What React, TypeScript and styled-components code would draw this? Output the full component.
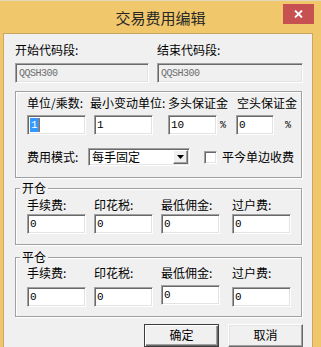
import React from "react";
import styled, { createGlobalStyle } from "styled-components";

const Global = createGlobalStyle`
  html, body { margin: 0; padding: 0; background: #f1c76c; }
  body {
    font-family: "Noto Sans CJK SC", "Liberation Sans", sans-serif;
    font-size: 12px;
    color: #000;
  }
  * { box-sizing: border-box; }
`;

const mono = `"Liberation Mono", "DejaVu Sans Mono", monospace`;

const Window = styled.div`
  width: 321px;
  height: 347px;
  overflow: hidden;
  background: #f1c76c;
  border-top: 1px solid #e2d6bb;
  display: flex;
  flex-direction: column;
`;

const TitleBar = styled.div`
  height: 32px;
  flex: none;
  display: grid;
  grid-template-columns: 1fr auto 1fr;
  align-items: start;
`;

const Title = styled.div`
  grid-column: 2;
  padding-top: 7px;
  line-height: 20px;
  font-size: 15px;
  color: #262626;
  white-space: nowrap;
`;

const CloseButton = styled.div`
  grid-column: 3;
  justify-self: end;
  margin: 3px 7px 0 0;
  width: 31px;
  height: 20px;
  background: #c75050;
  display: flex;
  align-items: center;
  justify-content: center;
`;

const Client = styled.div`
  flex: 1;
  margin: 0 8px 0 3px;
  background: #f0f0f0;
  border: 1px solid #c8a860;
  border-bottom: none;
  padding: 0 9px 0 11px;
  display: flex;
  flex-direction: column;
`;

const TopGrid = styled.div`
  margin-top: 9px;
  display: grid;
  grid-template-columns: 134px 146px;
  grid-template-rows: 14px 20px;
  column-gap: 8px;
  row-gap: 6px;
`;

const Label = styled.div<{ $w?: number; $ml?: number }>`
  line-height: 14px;
  height: 14px;
  white-space: nowrap;
  flex: none;
  ${(p) => (p.$w ? `width: ${p.$w}px;` : "")}
  ${(p) => (p.$ml ? `margin-left: ${p.$ml}px;` : "")}
`;

const sunken = `
  border-style: solid;
  border-width: 1px;
  border-color: #a0a0a0 #ffffff #ffffff #a0a0a0;
  box-shadow: inset 1px 1px 0 #696969, inset -1px -1px 0 #e3e3e3;
`;

const DisabledField = styled.div`
  height: 20px;
  ${sunken}
  background: #f0f0f0;
  color: #6d6d6d;
  font-family: ${mono};
  font-size: 10px;
  letter-spacing: -0.5px;
  padding-left: 3px;
  display: flex;
  align-items: center;
`;

const Field = styled.div<{ $w?: number; $ml?: number; $dy?: number }>`
  flex: none;
  width: ${(p) => p.$w ?? 59}px;
  height: 20px;
  margin-left: ${(p) => p.$ml ?? 0}px;
  margin-top: ${(p) => p.$dy ?? 0}px;
  ${sunken}
  background: #ffffff;
  font-family: ${mono};
  font-size: 11px;
  padding-left: 2px;
  display: flex;
  align-items: center;
`;

const Selected = styled.span`
  background: #3399ff;
  color: #fff;
  padding: 0 1px;
  line-height: 14px;
`;

const Caret = styled.span`
  width: 1px;
  height: 14px;
  background: #c0661a;
`;

const Panel = styled.div`
  margin-top: 8px;
  width: 287px;
  height: 87px;
  border: 1px solid #a0a0a0;
  box-shadow: inset 1px 1px 0 #fff, 1px 1px 0 #fff;
  padding: 4px 0 0 11px;
  display: flex;
  flex-direction: column;
`;

const Row = styled.div<{ $mt?: number; $h: number }>`
  display: flex;
  align-items: center;
  margin-top: ${(p) => p.$mt ?? 0}px;
  height: ${(p) => p.$h}px;
`;

const Pct = styled.span<{ $ml: number }>`
  flex: none;
  width: 6px;
  margin-left: ${(p) => p.$ml}px;
  font-family: ${mono};
  font-size: 10px;
`;

const Select = styled.div`
  flex: none;
  width: 102px;
  height: 18px;
  ${sunken}
  background: #fff;
  display: flex;
  align-items: center;
  padding-left: 3px;
`;

const SelectText = styled.span`
  flex: 1;
  line-height: 14px;
`;

const DropButton = styled.div`
  width: 15px;
  height: 14px;
  margin-right: 1px;
  background: #f0f0f0;
  border: 1px solid;
  border-color: #ffffff #696969 #696969 #ffffff;
  box-shadow: inset -1px -1px 0 #a0a0a0;
  display: flex;
  align-items: center;
  justify-content: center;
`;

const CheckBox = styled.div`
  flex: none;
  width: 13px;
  height: 13px;
  margin-left: 14px;
  ${sunken}
  background: #fff;
`;

const GroupBox = styled.div<{ $mt: number; $h: number }>`
  margin-top: ${(p) => p.$mt}px;
  width: 287px;
  height: ${(p) => p.$h}px;
  border: 1px solid #a0a0a0;
  box-shadow: inset 1px 1px 0 #fff, 1px 1px 0 #fff;
  padding-left: 11px;
  display: flex;
  flex-direction: column;
`;

const Legend = styled.div`
  align-self: flex-start;
  margin: -8px 0 0 -7px;
  padding: 0 2px;
  background: #f0f0f0;
  line-height: 14px;
  height: 14px;
`;

const FeeGrid = styled.div<{ $mt: number; $gap: number }>`
  margin-top: ${(p) => p.$mt}px;
  display: grid;
  grid-template-columns: 67px 67px 71px 59px;
  grid-template-rows: 14px 20px;
  row-gap: ${(p) => p.$gap}px;
`;

const ButtonRow = styled.div`
  margin-top: 7px;
  display: flex;
  justify-content: flex-end;
  gap: 9px;
`;

const Button = styled.button<{ $default?: boolean }>`
  width: 75px;
  height: 23px;
  margin: 0;
  padding: 0 0 2px;
  font-family: "Noto Sans CJK SC", sans-serif;
  font-size: 12px;
  color: #000;
  background: #f0f0f0;
  border: 1px solid;
  border-color: ${(p) =>
    p.$default ? "#3c3c3c" : "#ffffff #696969 #696969 #ffffff"};
  box-shadow: ${(p) =>
    p.$default
      ? "inset 1px 1px 0 #fff, inset -1px -1px 0 #696969, inset -2px -2px 0 #a0a0a0"
      : "inset -1px -1px 0 #a0a0a0, inset 1px 1px 0 #e3e3e3"};
`;

const fees = ["手续费:", "印花税:", "最低佣金:", "过户费:"];

function FeeGroup({
  title,
  mt,
  h,
  labelGap,
  rowGap,
  shiftThird,
}: {
  title: string;
  mt: number;
  h: number;
  labelGap: number;
  rowGap: number;
  shiftThird?: boolean;
}) {
  return (
    <GroupBox $mt={mt} $h={h}>
      <Legend>{title}</Legend>
      <FeeGrid $mt={labelGap} $gap={rowGap}>
        {fees.map((f) => (
          <Label key={f}>{f}</Label>
        ))}
        {fees.map((f, i) => (
          <Field key={f} $dy={shiftThird && i === 2 ? -2 : 0}>
            0
          </Field>
        ))}
      </FeeGrid>
    </GroupBox>
  );
}

export default function App() {
  return (
    <>
      <Global />
      <Window>
        <TitleBar>
          <Title>交易费用编辑</Title>
          <CloseButton>
            <svg width="9" height="8" viewBox="0 0 9 8">
              <path d="M1 0.5 L8 7.5 M8 0.5 L1 7.5" stroke="#fff" strokeWidth="1.8" />
            </svg>
          </CloseButton>
        </TitleBar>
        <Client>
          <TopGrid>
            <Label>开始代码段:</Label>
            <Label>结束代码段:</Label>
            <DisabledField>QQSH300</DisabledField>
            <DisabledField>QQSH300</DisabledField>
          </TopGrid>
          <Panel>
            <Row $h={14}>
              <Label $w={63}>单位/乘数:</Label>
              <Label $w={78}>最小变动单位:</Label>
              <Label $w={69}>多头保证金</Label>
              <Label>空头保证金</Label>
            </Row>
            <Row $mt={5} $h={20}>
              <Field $w={59}>
                <Selected>1</Selected>
                <Caret />
              </Field>
              <Field $w={59} $ml={8}>1</Field>
              <Field $w={49} $ml={15}>10</Field>
              <Pct $ml={3}>%</Pct>
              <Field $w={38} $ml={10}>0</Field>
              <Pct $ml={11}>%</Pct>
            </Row>
            <Row $mt={13} $h={18}>
              <Label $w={61}>费用模式:</Label>
              <Select>
                <SelectText>每手固定</SelectText>
                <DropButton>
                  <svg width="7" height="4" viewBox="0 0 7 4">
                    <path d="M0 0 H7 L3.5 4 Z" fill="#000" />
                  </svg>
                </DropButton>
              </Select>
              <CheckBox />
              <Label $ml={5}>平今单边收费</Label>
            </Row>
          </Panel>
          <FeeGroup title="开仓" mt={10} h={57} labelGap={3} rowGap={2} />
          <FeeGroup title="平仓" mt={12} h={60} labelGap={2} rowGap={7} shiftThird />
          <ButtonRow>
            <Button $default>确定</Button>
            <Button>取消</Button>
          </ButtonRow>
        </Client>
      </Window>
    </>
  );
}
